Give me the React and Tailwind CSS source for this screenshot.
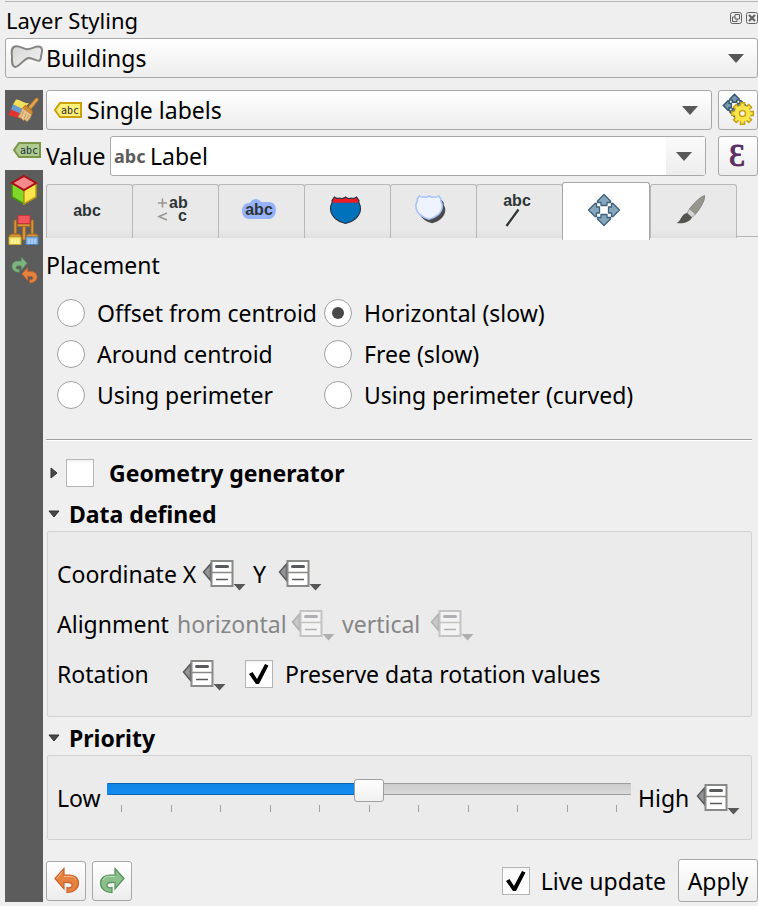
import React, { useState } from "react";

const buttonFace =
  "rounded-[3px] border border-[#a8a8a8] bg-linear-to-b from-white to-[#ededed]";

function PolygonIcon() {
  return (
    <svg width="34" height="26" viewBox="0 0 34 26" aria-hidden="true">
      <defs>
        <linearGradient id="poly" x1="0" y1="0" x2="1" y2="1">
          <stop offset="0" stopColor="#d4d4d4" />
          <stop offset="1" stopColor="#f6f6f6" />
        </linearGradient>
      </defs>
      <path
        d="M5 3.500C9 2.500 13 5.500 17 6.200C21 6.500 25 3 29 3.500C32.500 4 32.500 8 31.500 11C30.500 15 31 18 29 17.800C25 17.300 22 15 18 15C13 17 10 23 5.500 24C1 23.500 2 17 2 13C1.500 9 1 4.500 5 3.500Z"
        fill="url(#poly)"
        stroke="#85867f"
        strokeWidth="2"
      />
    </svg>
  );
}

function TagIcon({ fill, stroke, ink }) {
  return (
    <svg width="30" height="18" viewBox="0 0 30 18" aria-hidden="true">
      <path d="M7 2H28V16H7L2 9Z" fill={fill} stroke={stroke} strokeWidth="2" />
      <text x="8" y="13" fontSize="10" fontFamily="DejaVu Sans Mono, monospace" fill={ink}>
        abc
      </text>
    </svg>
  );
}

function BroomIcon() {
  return (
    <svg width="32" height="28" viewBox="0 0 32 28" aria-hidden="true">
      <path d="M8 3.500C12 3 16 8 21 7L15 14L5 8.500Z" fill="#f3df5b" />
      <path d="M5 8.500L15 13L12 18L3 13.500Z" fill="#6c9bd2" />
      <path d="M3 13.500L12 17.500L14 23L0 19Z" fill="#e0342f" />
      <path d="M28 2C30 1.500 31 3 30 4.500L22.500 14L19.500 11.500Z" fill="#e0a350" stroke="#a8691d" strokeWidth="0.800" />
      <path d="M17 9.500C19 10 24 13 25 16L23.500 19L14.500 12.500Z" fill="#cf8a35" stroke="#9c611a" strokeWidth="0.800" />
      <path d="M14.500 12L23.500 18.500C23 21 21 24 19 25.500L16.500 23.500L15.500 24.500L13 22L10 21C12 18.500 13.500 15 14.500 12Z" fill="#e8c48c" stroke="#b98a4c" strokeWidth="0.800" />
      <path d="M16 15L13 21M18.500 17L16 22.500M21 19L18.500 23.500" stroke="#c79a5c" strokeWidth="1" />
    </svg>
  );
}

function CubeIcon() {
  return (
    <svg width="28" height="32" viewBox="0 0 28 32" aria-hidden="true">
      <path d="M2 9L14 16V30L2 23Z" fill="#7fd92b" stroke="#4b8a12" strokeWidth="1.500" />
      <path d="M26 9L14 16V30L26 23Z" fill="#fbe54c" stroke="#b79a14" strokeWidth="1.500" />
      <path d="M14 2L26 9L14 16L2 9Z" fill="#f58a8c" stroke="#a90f14" strokeWidth="2" />
    </svg>
  );
}

function BrushesIcon() {
  return (
    <svg width="32" height="32" viewBox="0 0 32 32" aria-hidden="true">
      <path d="M6 6H8.500V20H6ZM23 6H25.500V20H23ZM14.500 12H17.500V26H14.500Z" fill="#d9933a" stroke="#a0681f" strokeWidth="0.800" />
      <path d="M9.500 10H22V12.500H9.500Z" fill="#d9933a" stroke="#a0681f" strokeWidth="0.800" />
      <path d="M10 1.500H22V9.500H10Z" fill="#f0565b" stroke="#c8343a" strokeWidth="1" />
      <path d="M1 23C1 20 3 20 7 20C12 20 13 20 13 23Z" fill="#d9933a" stroke="#a0681f" strokeWidth="1" />
      <path d="M18 23C18 20 20 20 24 20C29 20 30 20 30 23Z" fill="#d9933a" stroke="#a0681f" strokeWidth="1" />
      <path d="M1 23H13V30.500H1Z" fill="#fbe870" stroke="#c8a832" strokeWidth="1" />
      <path d="M18 23H30V30.500H18Z" fill="#89b8ea" stroke="#4f83bd" strokeWidth="1" />
      <path d="M4 25V30M7 25V30M10 25V30" stroke="#fff7c0" strokeWidth="1" />
      <path d="M21 25V30M24 25V30M27 25V30" stroke="#c4dcf6" strokeWidth="1" />
    </svg>
  );
}

const undoPath =
  "M1.500 11.500L10.500 1.500V8H16C22 8 25 12 25 16C25 21 21 25.500 13.500 25.500V20.500C17 21.500 19 20 18.500 17.500C18 15.500 16.500 15 10.500 15.500V22Z";

function UndoIcon() {
  return (
    <svg width="27" height="27" viewBox="0 0 26 27" aria-hidden="true">
      <path d={undoPath} fill="#e5823d" stroke="#cb5f2c" strokeWidth="1.200" />
      <path d="M3 11.500L9 4.500M10.500 9.500H17C20 9.500 21.500 11 22.500 13" fill="none" stroke="#f3b98c" strokeWidth="1" />
    </svg>
  );
}

function RedoIcon() {
  return (
    <svg width="27" height="27" viewBox="0 0 26 27" aria-hidden="true">
      <g transform="translate(26 0) scale(-1 1)">
        <path d={undoPath} fill="#8bbf8b" stroke="#56905c" strokeWidth="1.200" />
        <path d="M10.500 9.500H17C20 9.500 21.500 11 22.500 13" fill="none" stroke="#c0dfc0" strokeWidth="1" />
      </g>
    </svg>
  );
}

function HistoryIcon() {
  return (
    <svg width="28" height="28" viewBox="0 0 28 28" aria-hidden="true">
      <g transform="translate(18 0) scale(-0.640 0.640)">
        <path d={undoPath} fill="#7db482" stroke="#56905c" strokeWidth="1" />
      </g>
      <g transform="translate(11 10.500) scale(0.640)">
        <path d={undoPath} fill="#e5823d" stroke="#cb5f2c" strokeWidth="1" />
      </g>
    </svg>
  );
}

const arrowUp = "M16 0.500L22.500 7V8.500H19V11.500H13V8.500H9.500V7Z";

function MoveIcon() {
  return (
    <svg width="34" height="34" viewBox="-1 -1 34 34" aria-hidden="true">
      {[0, 90, 180, 270].map((a) => (
        <path
          key={a}
          d={arrowUp}
          transform={`rotate(${a} 16 16)`}
          fill="#87a6bb"
          stroke="#3c617c"
          strokeWidth="1.300"
          strokeLinejoin="round"
        />
      ))}
    </svg>
  );
}

function PlacementGearIcon() {
  return (
    <svg width="36" height="36" viewBox="0 0 36 36" className="shrink-0" aria-hidden="true">
      <g transform="translate(3 2) scale(0.720)">
        {[0, 90, 180, 270].map((a) => (
          <path key={a} d={arrowUp} transform={`rotate(${a} 16 16)`} fill="#7997ae" stroke="#34566f" strokeWidth="2" />
        ))}
      </g>
      <g transform="translate(22.500 21.500)">
        {[0, 45, 90, 135, 180, 225, 270, 315].map((a) => (
          <path key={a} d="M-2 -7V-10.800H2V-7" transform={`rotate(${a})`} fill="#fbe54c" stroke="#c4a212" strokeWidth="1.500" />
        ))}
        <circle r="8" fill="#fbe54c" />
        <circle r="3" fill="#f6f6f6" stroke="#c4a212" strokeWidth="1.500" />
      </g>
    </svg>
  );
}

const shieldTop = "M5 1C7 3.500 10 1.500 12 2.500C14 2.500 15 1.500 16 1C17 1.500 18 2.500 20 2.500C22 1.500 25 3.500 27 1";
const shieldPath = `${shieldTop}L29.500 4.500C28 7 31.500 8 31 13C30.500 21 23 26 16 27.500C9 26 1.500 21 1 13C0.500 8 4 7 2.500 4.500Z`;

function ShieldIcon() {
  return (
    <svg width="33" height="29" viewBox="-0.500 0 33 29" aria-hidden="true">
      <path d={shieldPath} fill="#0072bc" />
      <path d={`${shieldTop}L29.500 4.500L29 6.800H3L2.500 4.500Z`} fill="#ed1c24" />
      <path d={shieldPath} fill="none" stroke="#263645" strokeWidth="1.200" />
    </svg>
  );
}

function ShadowIcon() {
  return (
    <svg width="34" height="32" viewBox="0 0 34 32" aria-hidden="true">
      <g transform="translate(4 5) scale(0.880)">
        <path d={shieldPath} fill="#4b4b4b" />
      </g>
      <g transform="translate(1 1) scale(0.880)">
        <path d={shieldPath} fill="#eef3fe" stroke="#a9c1fa" strokeWidth="1.800" />
      </g>
    </svg>
  );
}

function BrushIcon() {
  return (
    <svg width="32" height="32" viewBox="0 0 32 32" aria-hidden="true">
      <path d="M29.500 1.500C30.500 6 25 15 20.500 20L14.500 15C18 10 25 3 29.500 1.500Z" fill="#96968f" stroke="#77776f" strokeWidth="0.800" />
      <path d="M14.500 15L20.500 20L17 23.500L12 19Z" fill="#d4d4d0" stroke="#8d8d88" strokeWidth="0.800" />
      <path d="M12 19L17 23.500C15 28 8 30 1.500 29C6 27.500 6 20 12 19Z" fill="#555550" />
    </svg>
  );
}

const sansBold = { fontFamily: "Liberation Sans, Arial, sans-serif", fontWeight: 700 };

function PlainTextIcon() {
  return (
    <svg width="34" height="30" viewBox="0 0 34 30" aria-hidden="true">
      <text x="17" y="21" textAnchor="middle" fontSize="16" fill="#2e3436" {...sansBold}>abc</text>
    </svg>
  );
}

function FormatIcon() {
  return (
    <svg width="34" height="34" viewBox="0 0 34 34" aria-hidden="true">
      <path d="M2 10H11M6.500 5.500V14.500M11 20L3 23.500L11 27" fill="none" stroke="#96978f" strokeWidth="1.500" />
      <text x="13" y="15" fontSize="16" fill="#2e3436" {...sansBold}>ab</text>
      <text x="22" y="28" fontSize="16" fill="#2e3436" {...sansBold}>c</text>
    </svg>
  );
}

function BufferIcon() {
  return (
    <svg width="36" height="30" viewBox="0 0 36 30" aria-hidden="true">
      <path d="M1 16C1 11 4 8 8 8C10 8 10 4 15 4C19 4 19 8 23 7C25 7 25 7 28 7C33 7 35 11 35 15C35 20 32 24 28 24H8C4 24 1 21 1 16Z" fill="#96b2fb" />
      <text x="18" y="20" textAnchor="middle" fontSize="16" fill="#2e3436" {...sansBold}>abc</text>
    </svg>
  );
}

function CalloutIcon() {
  return (
    <svg width="34" height="36" viewBox="0 0 34 36" aria-hidden="true">
      <text x="17" y="14" textAnchor="middle" fontSize="16" fill="#2e3436" {...sansBold}>abc</text>
      <path d="M18.500 17.500L6.500 34" stroke="#2e3436" strokeWidth="2.200" />
    </svg>
  );
}

function OverrideButton({ label, disabled }) {
  return (
    <button type="button" aria-label={label} disabled={disabled} className="shrink-0 disabled:opacity-40">
      <svg width="44" height="34" viewBox="0 0 44 34" aria-hidden="true">
        <path d="M8.500 7L1.500 15L8.500 23.500Z" fill="#939598" stroke="#58595b" strokeWidth="1.500" />
        <path d="M9.500 4H30.500V29H9.500Z" fill="#fff" stroke="#888a85" strokeWidth="2" />
        <path d="M9.500 15.500H30.500" stroke="#888a85" strokeWidth="1.500" />
        <path d="M14.500 9.500H25.500" stroke="#58595b" strokeWidth="3" strokeLinecap="round" />
        <path d="M14 22.500H26" stroke="#58595b" strokeWidth="1.500" />
        <path d="M31.500 27H43.500L37.500 33.500Z" fill="#585858" />
      </svg>
    </button>
  );
}

function Combo({ label, options, icon, iconClass, inset, className, editable }) {
  return (
    <div className={`relative h-10 min-w-0 flex-1 ${className || ""}`}>
      <select
        aria-label={label}
        className={`h-full w-full appearance-none rounded-[3px] border border-[#a8a8a8] text-black ${inset} ${
          editable ? "bg-white" : "bg-linear-to-b from-white to-[#ededed]"
        }`}
      >
        {options.map((o) => (
          <option key={o}>{o}</option>
        ))}
      </select>
      <span className={`pointer-events-none absolute inset-y-0 flex items-center ${iconClass}`}>{icon}</span>
      <span
        className={`pointer-events-none absolute inset-y-px right-px flex items-center justify-end pr-[13px] ${
          editable ? "w-[39px] bg-linear-to-b from-[#fafafa] to-[#ededed]" : "w-8"
        }`}
      >
        <svg width="16" height="9" viewBox="0 0 16 9" aria-hidden="true">
          <path d="M0 0H16L8 9Z" fill="#585858" />
        </svg>
      </span>
    </div>
  );
}

function CheckBox({ id, defaultChecked }) {
  return (
    <span className="relative flex size-7 shrink-0">
      <input
        id={id}
        type="checkbox"
        defaultChecked={defaultChecked}
        className="peer size-7 appearance-none border border-[#b4b4b4] bg-linear-to-b from-[#f2f2f2] via-white via-15% to-white"
      />
      <svg
        className="pointer-events-none absolute inset-0 hidden peer-checked:block"
        width="28"
        height="28"
        viewBox="0 0 28 28"
        aria-hidden="true"
      >
        <path d="M4 14L7.500 12L12 19L20 4L23.500 5.500L14 24H11Z" fill="#000" />
      </svg>
    </span>
  );
}

function Radio({ label, checked, onSelect }) {
  return (
    <label className="flex h-[41px] items-center gap-3 whitespace-nowrap">
      <span className="relative flex size-7 shrink-0">
        <input
          type="radio"
          name="placement"
          checked={checked}
          onChange={onSelect}
          className="peer size-7 appearance-none rounded-full border border-[#a0a0a0] bg-white"
        />
        <span className="pointer-events-none absolute inset-2 hidden rounded-full bg-[#484848] peer-checked:block" />
      </span>
      {label}
    </label>
  );
}

function Expander({ open }) {
  return (
    <svg width="12" height="12" viewBox="0 0 12 12" aria-hidden="true" className="shrink-0">
      {open ? (
        <path d="M1 3H11L6 9Z" fill="#484848" stroke="#303030" strokeWidth="1" />
      ) : (
        <path d="M3 1L9 6L3 11Z" fill="#484848" stroke="#303030" strokeWidth="1" />
      )}
    </svg>
  );
}

const tabs = [
  ["Text", <PlainTextIcon />],
  ["Formatting", <FormatIcon />],
  ["Buffer", <BufferIcon />],
  ["Background", <ShieldIcon />],
  ["Shadow", <ShadowIcon />],
  ["Callouts", <CalloutIcon />],
  ["Placement", <MoveIcon />],
  ["Rendering", <BrushIcon />],
];

const placements = [
  "Offset from centroid",
  "Horizontal (slow)",
  "Around centroid",
  "Free (slow)",
  "Using perimeter",
  "Using perimeter (curved)",
];

export default function App() {
  const [tab, setTab] = useState("Placement");
  const [placement, setPlacement] = useState("Horizontal (slow)");
  const [priority, setPriority] = useState(5);

  return (
    <div className="min-h-screen bg-[#efefef] pt-px pb-1 pl-[5px] font-['Noto_Sans','Open_Sans',sans-serif] text-[23px] leading-[30px] text-black">
      <header className="flex h-[37px] items-center justify-between border-t border-[#b4b4b4]">
        <h1 className="pl-px text-[22px]">Layer Styling</h1>
        <div className="flex gap-1 pb-1">
          <button type="button" aria-label="Float panel">
            <svg width="12" height="12" viewBox="0 0 12 12" fill="none" stroke="#606060" aria-hidden="true">
              <rect x="0.500" y="0.500" width="11" height="11" rx="2" />
              <path d="M5 2.500H9.500V7H5ZM5 5H2.500V9.500H7V7" />
            </svg>
          </button>
          <button type="button" aria-label="Close panel">
            <svg width="12" height="12" viewBox="0 0 12 12" fill="none" stroke="#606060" aria-hidden="true">
              <rect x="0.500" y="0.500" width="11" height="11" rx="2" />
              <path d="M3 3L9 9M9 3L3 9" strokeWidth="2" />
            </svg>
          </button>
        </div>
      </header>

      <div className="flex">
        <Combo label="Layer" options={["Buildings"]} icon={<PolygonIcon />} iconClass="left-[5px] pb-1" inset="pl-10" />
      </div>

      <div className="mt-3 flex gap-[3px]">
        <nav className="flex w-[38px] shrink-0 flex-col bg-[#5c5c5c]" aria-label="Style pages">
          <button type="button" aria-label="Symbology" className="flex h-10 items-center justify-center">
            <BroomIcon />
          </button>
          <button type="button" aria-label="Labels" className="flex h-10 items-center justify-end bg-[#efefef] pr-px">
            <TagIcon fill="#aecb90" stroke="#7d9748" ink="#22303c" />
          </button>
          <button type="button" aria-label="3D view" className="flex h-10 items-center justify-center">
            <CubeIcon />
          </button>
          <button type="button" aria-label="Style manager" className="flex h-10 items-center justify-center">
            <BrushesIcon />
          </button>
          <button type="button" aria-label="History" className="flex h-10 items-center justify-center">
            <HistoryIcon />
          </button>
        </nav>

        <main className="min-w-0 flex-1">
          <div className="flex gap-[6px]">
            <Combo
              label="Label mode"
              options={["Single labels"]}
              icon={<TagIcon fill="#fff07a" stroke="#c9a20c" ink="#2b2b2b" />}
              iconClass="left-[7px]"
              inset="pl-10"
            />
            <button type="button" aria-label="Placement engine settings" className={`flex size-10 items-center justify-center ${buttonFace}`}>
              <PlacementGearIcon />
            </button>
          </div>

          <div className="mt-[6px] flex items-center">
            <span className="w-16 shrink-0">Value</span>
            <Combo
              label="Value"
              options={["Label"]}
              icon={<span className="text-[18px] font-bold text-[#5c5c5c]">abc</span>}
              iconClass="left-1 pb-px"
              inset="pl-[39px]"
              editable
              className="mr-3"
            />
            <button type="button" aria-label="Expression" className={`flex size-10 items-center justify-center ${buttonFace}`}>
              <svg width="38" height="38" viewBox="0 0 38 38" className="shrink-0" aria-hidden="true">
                <text x="18" y="29" textAnchor="middle" fontSize="32" fontFamily="Liberation Serif, DejaVu Serif, serif" fill="#5b2f63" stroke="#5b2f63" strokeWidth="1">
                  Ɛ
                </text>
              </svg>
            </button>
          </div>

          <div role="tablist" className="mt-[6px] flex h-[58px] items-start">
            {tabs.map(([name, icon]) => (
              <button
                key={name}
                type="button"
                role="tab"
                aria-label={name}
                aria-selected={tab === name}
                onClick={() => setTab(name)}
                className={
                  tab === name
                    ? "flex h-[58px] min-w-0 basis-[88px] items-center justify-center rounded-t-[3px] border border-b-0 border-[#a8a8a8] bg-white pr-1 pb-[3px]"
                    : "mt-[2px] -mr-px flex h-[54px] min-w-0 basis-[87px] items-center justify-center rounded-t-[3px] border border-b-0 border-[#b8b8b8] bg-linear-to-b from-[#e9e9e9] from-85% to-[#e0e0e0] pr-[5px] pb-[3px]"
                }
              >
                {icon}
              </button>
            ))}
            <div className="mt-[54px] h-px flex-1 bg-[#b4b4b4]" />
          </div>

          <section>
            <h2 className="mt-[10px]">Placement</h2>
            <div className="mt-3 grid grid-cols-[267px_1fr] pl-[11px]">
              {placements.map((p) => (
                <Radio key={p} label={p} checked={placement === p} onSelect={() => setPlacement(p)} />
              ))}
            </div>
          </section>

          <hr className="mt-6 mr-[6px] h-[2px] border-t border-b border-t-[#a0a0a0] border-b-white" />

          <div className="mt-3 flex h-10 items-center font-bold">
            <button type="button" aria-label="Expand geometry generator" className="mr-[6px] pl-[2px]">
              <Expander />
            </button>
            <CheckBox id="geometry" />
            <label htmlFor="geometry" className="pl-[15px]">Geometry generator</label>
          </div>

          <section className="mr-[6px]">
            <h2 className="flex h-[38px] items-end pb-[2px] font-bold">
              <button type="button" className="flex items-center gap-[9px] pl-[2px]">
                <Expander open />
                Data defined
              </button>
            </h2>
            <div className="ml-px rounded-[2px] border border-[#d2d2d2] bg-[#ebebeb] px-[9px] py-[17px]">
              <div className="flex h-[50px] items-center">
                <span className="w-[145px]">Coordinate X</span>
                <OverrideButton label="Override X" />
                <span className="w-8 pl-[7px]">Y</span>
                <OverrideButton label="Override Y" />
              </div>
              <div className="flex h-[50px] items-center">
                <span className="w-[120px]">Alignment</span>
                <span className="w-[114px] text-[#868686]">horizontal</span>
                <OverrideButton label="Override horizontal alignment" disabled />
                <span className="w-[95px] pl-[7px] text-[#868686]">vertical</span>
                <OverrideButton label="Override vertical alignment" disabled />
              </div>
              <div className="flex h-[50px] items-center">
                <span className="w-[125px]">Rotation</span>
                <OverrideButton label="Override rotation" />
                <label htmlFor="preserve" className="flex items-center gap-3 pl-[19px] whitespace-nowrap">
                  <CheckBox id="preserve" defaultChecked />
                  Preserve data rotation values
                </label>
              </div>
            </div>
          </section>

          <section className="mr-[6px]">
            <h2 className="flex h-[38px] items-end pb-[2px] font-bold">
              <button type="button" className="flex items-center gap-[9px] pl-[2px]">
                <Expander open />
                Priority
              </button>
            </h2>
            <div className="ml-px flex h-[85px] items-center rounded-[2px] border border-[#d2d2d2] bg-[#ebebeb] pr-[11px] pl-[9px]">
              <label htmlFor="priority" className="w-[50px] shrink-0">Low</label>
              <div className="min-w-0 flex-1 pb-[6px]">
                <input
                  id="priority"
                  type="range"
                  min="0"
                  max="10"
                  value={priority}
                  onChange={(e) => setPriority(Number(e.target.value))}
                  style={{ "--fill": `${priority * 10}%` }}
                  className="block h-6 w-full appearance-none bg-transparent [&::-webkit-slider-runnable-track]:h-3 [&::-webkit-slider-runnable-track]:rounded-[1px] [&::-webkit-slider-runnable-track]:bg-[linear-gradient(to_bottom,#00000048_1px,#00000010_1px,transparent_11px,#00000048_11px),linear-gradient(to_right,#118df2_var(--fill),#dadada_var(--fill))] [&::-webkit-slider-thumb]:-mt-1 [&::-webkit-slider-thumb]:h-[23px] [&::-webkit-slider-thumb]:w-[30px] [&::-webkit-slider-thumb]:appearance-none [&::-webkit-slider-thumb]:rounded-[3px] [&::-webkit-slider-thumb]:border [&::-webkit-slider-thumb]:border-[#a0a0a0] [&::-webkit-slider-thumb]:bg-linear-to-b [&::-webkit-slider-thumb]:from-white [&::-webkit-slider-thumb]:to-[#f0f0f0]"
                />
                <div className="mt-1 flex justify-between px-[14px]" aria-hidden="true">
                  {Array.from({ length: 11 }, (_, i) => (
                    <span key={i} className="h-[7px] w-px bg-[#a0a0a0]" />
                  ))}
                </div>
              </div>
              <span className="w-[65px] shrink-0 pl-[7px]">High</span>
              <OverrideButton label="Override priority" />
            </div>
          </section>

          <footer className="mt-[19px] flex items-center">
            <button type="button" aria-label="Undo" className={`flex size-10 items-center justify-center ${buttonFace}`}>
              <UndoIcon />
            </button>
            <button type="button" aria-label="Redo" className={`ml-[6px] flex size-10 items-center justify-center ${buttonFace}`}>
              <RedoIcon />
            </button>
            <label htmlFor="live" className="mr-3 ml-auto flex items-center gap-[11px]">
              <CheckBox id="live" defaultChecked />
              Live update
            </label>
            <button type="button" className={`h-[43px] w-20 ${buttonFace}`}>Apply</button>
          </footer>
        </main>
      </div>
    </div>
  );
}
